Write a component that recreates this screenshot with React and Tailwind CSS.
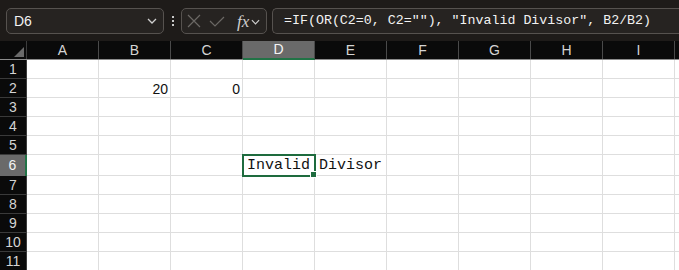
const cols = ['A', 'B', 'C', 'D', 'E', 'F', 'G', 'H', 'I'];
const rows = [1, 2, 3, 4, 5, 6, 7, 8, 9, 10, 11];

const cellText = {
  B2: '20',
  C2: '0',
};

const Chevron = ({ className }) => (
  <svg viewBox="0 0 10 6" className={className} fill="none" stroke="currentColor" strokeWidth="1.3">
    <path d="M1 1l4 4 4-4" />
  </svg>
);

const FormulaBar = () => (
  <div className="h-[41px] bg-[#1e1b19] flex items-start pt-[8px] pl-[6px] gap-[5px]">
    {/* Name box */}
    <div className="w-[158px] h-[26px] rounded-[5px] border border-[#56524f] bg-[#262321] flex items-center pl-[7px] pr-[6px]">
      <span className="text-[14px] text-[#f2f2f2] font-['Liberation_Sans',sans-serif]">D6</span>
      <Chevron className="ml-auto w-[10px] h-[6px] text-[#d0d0d0]" />
    </div>
    {/* divider dots */}
    <div className="w-[7px] h-[26px] flex flex-col items-center justify-center gap-[2px]">
      <span className="w-[2px] h-[2px] bg-[#c8c8c8]" />
      <span className="w-[2px] h-[2px] bg-[#c8c8c8]" />
      <span className="w-[2px] h-[2px] bg-[#c8c8c8]" />
    </div>
    {/* cancel / enter / fx */}
    <div className="w-[86px] h-[26px] rounded-[5px] border border-[#56524f] bg-[#262321] flex items-center pl-[5px]">
      <svg viewBox="0 0 14 14" className="w-[14px] h-[14px] text-[#6b6865]" fill="none" stroke="currentColor" strokeWidth="1.2">
        <path d="M1 1l12 12M13 1L1 13" />
      </svg>
      <svg viewBox="0 0 16 11" className="ml-[8px] w-[16px] h-[11px] text-[#6b6865]" fill="none" stroke="currentColor" strokeWidth="1.2">
        <path d="M1 5l5 5L15 1" />
      </svg>
      <span className="ml-[12px] text-[17px] leading-none italic text-[#cfcfcf] font-['Liberation_Serif',serif]">fx</span>
      <Chevron className="ml-[2px] mt-[1px] w-[9px] h-[6px] text-[#cfcfcf]" />
    </div>
    {/* formula */}
    <div className="flex-1 h-[26px] rounded-l-[5px] border border-r-0 border-[#56524f] bg-[#262321] flex items-center pl-[11px]">
      <span className="text-[13.3px] text-[#f2f2f2] whitespace-pre font-['Liberation_Mono',monospace]">
        =IF(OR(C2=0, C2=""), "Invalid Divisor", B2/B2)
      </span>
    </div>
  </div>
);

const HeaderRow = () => (
  <div className="h-[19px] flex bg-[#0a0a0a] border-b border-[#8c8c8c]">
    <div className="w-[27px] shrink-0 border-r border-[#3c3c3c] flex items-end justify-end pr-[2px] pb-[2px]">
      <svg viewBox="0 0 10 10" className="w-[10px] h-[10px]">
        <path d="M10 0V10H0z" fill="#6a6a6a" />
      </svg>
    </div>
    {cols.map(c => (
      <div
        key={c}
        className={`w-[72px] shrink-0 flex items-center justify-center text-[14px] font-['Liberation_Sans',sans-serif] ${
          c === 'D'
            ? 'bg-[#6a6a6a] text-[#f4f4f4] border-b-2 border-[#217346] -mb-[1px] border-r border-r-[#4a4a4a]'
            : 'text-[#d4d4d4] border-r border-[#4a4a4a]'
        }`}
      >
        {c}
      </div>
    ))}
    <div className="flex-1" />
  </div>
);

const Row = ({ n }) => {
  const tall = n === 6;
  return (
    <div className={`flex ${tall ? 'h-[21px]' : 'h-[19px]'}`}>
      <div
        className={`w-[27px] shrink-0 flex items-center justify-center text-[14px] font-['Liberation_Sans',sans-serif] ${
          tall
            ? 'bg-[#6a6a6a] text-[#f4f4f4] border-r-2 border-[#217346]'
            : 'bg-[#0a0a0a] text-[#d4d4d4] border-b border-[#3a3a3a] border-r border-r-[#3c3c3c]'
        }`}
      >
        {n}
      </div>
      {cols.map(c => {
        const id = `${c}${n}`;
        const isSel = id === 'D6';
        return (
          <div
            key={c}
            className="relative w-[72px] shrink-0 bg-white border-r border-b border-[#dedede] flex items-end justify-end pr-[2px] pb-[1px]"
          >
            {cellText[id] && (
              <span className="text-[14px] leading-none text-[#111] font-['Liberation_Sans',sans-serif]">{cellText[id]}</span>
            )}
            {isSel && (
              <>
                <div className="absolute -left-[1px] -top-[1px] w-[74px] h-[23px] border-2 border-[#1e6b3e] z-10" />
                <div className="absolute -right-[3px] -bottom-[3px] w-[5px] h-[5px] bg-[#1e6b3e] border border-white z-20 box-content" />
                <span className="absolute left-[4px] top-[2px] text-[15px] leading-[17px] text-[#111] whitespace-pre font-['Liberation_Mono',monospace] z-20">
                  Invalid Divisor
                </span>
              </>
            )}
          </div>
        );
      })}
      <div className="flex-1 bg-white border-b border-[#dedede]" />
    </div>
  );
};

const App = () => (
  <div className="w-[679px] h-[270px] overflow-hidden bg-white">
    <FormulaBar />
    <HeaderRow />
    {rows.map(n => (
      <Row key={n} n={n} />
    ))}
  </div>
);

export default App;
